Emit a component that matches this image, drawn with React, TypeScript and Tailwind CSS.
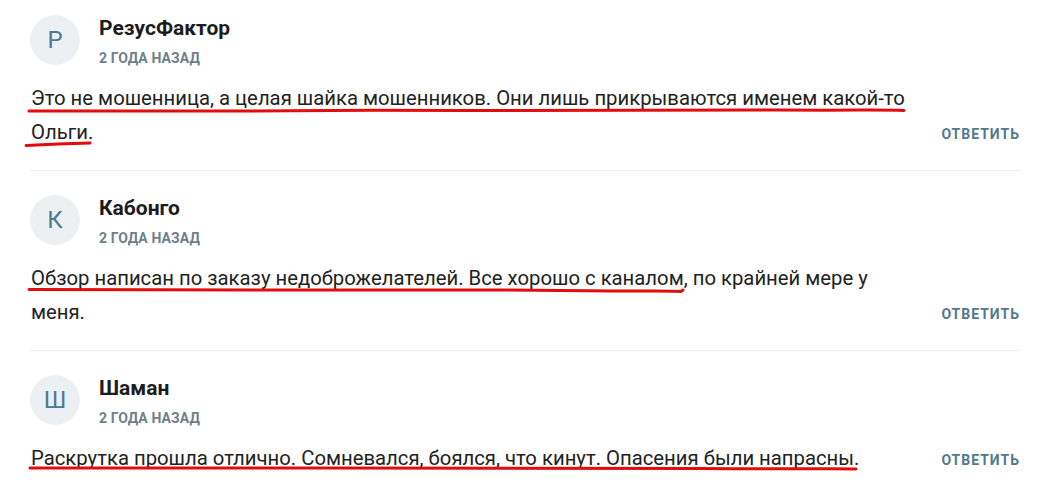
import React from "react";

type C = { letter: string; name: string; text: string };

const comments: C[] = [
  {
    letter: "Р",
    name: "РезусФактор",
    text: "Это не мошенница, а целая шайка мошенников. Они лишь прикрываются именем какой-то Ольги.",
  },
  {
    letter: "К",
    name: "Кабонго",
    text: "Обзор написан по заказу недоброжелателей. Все хорошо с каналом, по крайней мере у меня.",
  },
  {
    letter: "Ш",
    name: "Шаман",
    text: "Раскрутка прошла отлично. Сомневался, боялся, что кинут. Опасения были напрасны.",
  },
];

function Comment({ c }: { c: C }) {
  return (
    <div className="border-b border-[#ececec] pt-6 pb-[21px] first:pt-[15px] last:border-b-0">
      <div className="flex items-start">
        <div className="flex h-[50px] w-[50px] shrink-0 items-center justify-center rounded-full bg-[#edf0f3] text-[24px] text-[#4c7a92]">
          {c.letter}
        </div>
        <div className="ml-[19px] flex flex-col">
          <div className="text-[21px] font-bold leading-[26px] text-[#1c1c1c]">{c.name}</div>
          <div className="mt-[7px] text-[14px] font-bold uppercase leading-[20px] tracking-[0.1px] text-[#6f7f8a]">
            2 года назад
          </div>
        </div>
      </div>
      <div className="mt-[13px] flex items-end">
        <p className="flex-1 pl-px text-[20.3px] leading-[34px] text-[#222222]">{c.text}</p>
        <button className="ml-[30px] shrink-0 text-[14px] font-bold uppercase leading-[30px] tracking-[1px] text-[#52798d]">
          Ответить
        </button>
      </div>
    </div>
  );
}

export default function App() {
  return (
    <div
      className="relative h-[482px] w-[1046px] overflow-hidden bg-white pl-[30px] pr-[26px]"
      style={{ fontFamily: "Roboto, 'Noto Sans', sans-serif" }}
    >
      {comments.map((c) => (
        <Comment key={c.name} c={c} />
      ))}
      <svg
        className="pointer-events-none absolute left-0 top-0"
        width="1046"
        height="482"
        viewBox="0 0 1046 482"
        fill="none"
      >
        <g stroke="#e30b0b" strokeWidth="3" strokeLinecap="round" strokeLinejoin="round">
          <path d="M29 111 C 120 110.5, 200 111.5, 247 111 S 400 110, 465 110.5 S 700 109.5, 780 110 S 880 109.5, 904 110.5" />
          <path d="M26 145.5 C 45 144.5, 70 143.5, 90 143" />
          <path d="M29 289.5 C 120 289, 190 290.5, 260 290 S 450 289.5, 560 290.5 S 660 290.5, 681 291.5 L 683 290" />
          <path d="M30 468 C 120 467.5, 230 468.5, 330 468 S 560 467.5, 700 468.5 S 820 468, 856 469" />
        </g>
      </svg>
    </div>
  );
}
